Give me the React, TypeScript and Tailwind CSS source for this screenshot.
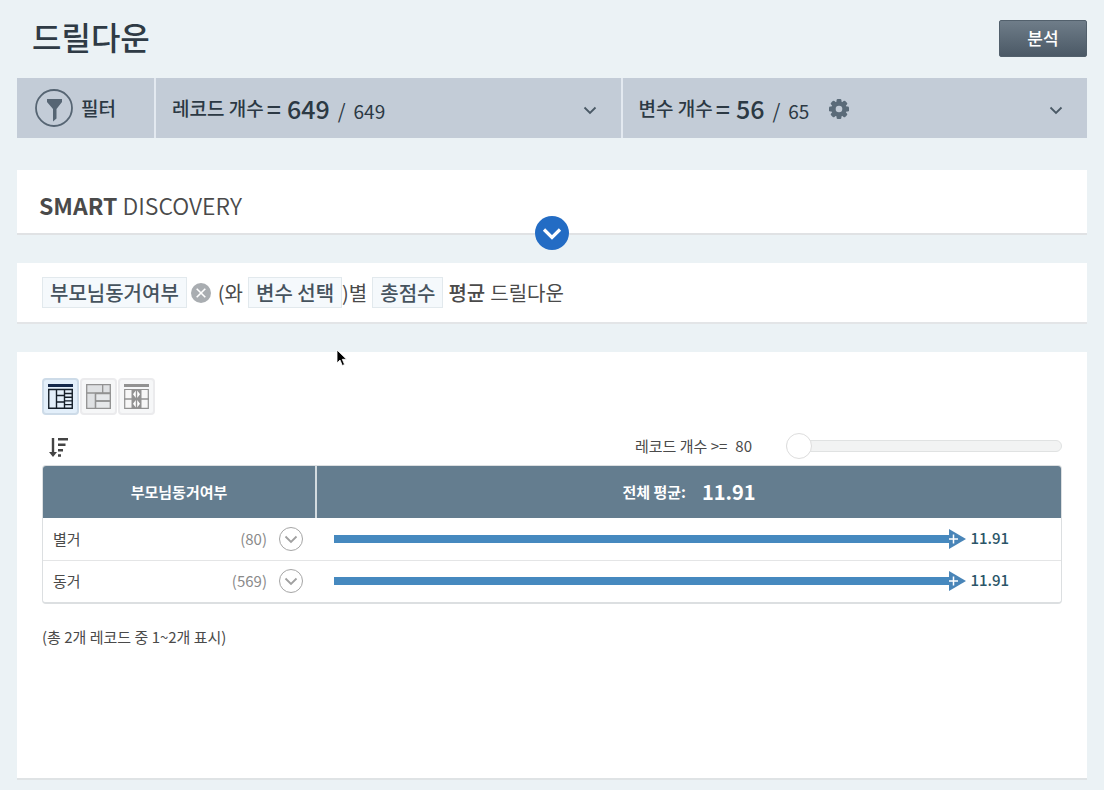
import { useState } from "react";

interface RowData {
  name: string;
  count: number;
  value: number;
  ratio: number;
}

const rows: RowData[] = [
  { name: "별거", count: 80, value: 11.91, ratio: 87 },
  { name: "동거", count: 569, value: 11.91, ratio: 87 },
];

const Chevron = ({ className }: { className: string }) => (
  <svg viewBox="0 0 14 14" className={className} fill="none" stroke="currentColor" strokeWidth="1.800">
    <path d="M1.500 4.500 7 10 12.500 4.500" />
  </svg>
);

const FilterIcon = () => (
  <svg viewBox="0 0 38 38" className="h-[38px] w-[38px] text-[#566573]">
    <circle cx="19" cy="19" r="18" fill="none" stroke="currentColor" strokeWidth="1.8" />
    <path d="M12 10h15v3l-5.500 7v9.500L18 32.500V20L12 13z" fill="currentColor" />
  </svg>
);

const GearIcon = () => (
  <svg viewBox="0 0 20 20" className="h-5 w-5 text-[#5b6b79]" fill="currentColor">
    {[0, 45, 90, 135].map((deg) => (
      <rect key={deg} x="7.600" y="0" width="4.800" height="20" rx="1.200" transform={`rotate(${deg} 10 10)`} />
    ))}
    <circle cx="10" cy="10" r="7.800" />
    <circle cx="10" cy="10" r="3.300" fill="#c3ccd7" />
  </svg>
);

const TableIcon = () => (
  <svg viewBox="0 0 25 25" className="h-[25px] w-[25px]" fill="none" stroke="#141e28">
    <path d="M0 1.500h25" stroke="#14284a" strokeWidth="3" />
    <path d="M.75 5v19.250h23.500V5M0 5.500h25M8.500 5v19M16.500 5v19M8.500 11.500h8M8.500 18h8" strokeWidth="1.400" />
    <path d="M16.500 9.500h8M16.500 13.200h8M16.500 16.900h8M16.500 20.600h8" strokeWidth="1.400" />
  </svg>
);

const TreemapIcon = () => (
  <svg viewBox="0 0 25 25" className="h-[25px] w-[25px]" stroke="#929292" strokeWidth="1.300">
    <path d="M.7.700h23.600v23.600H.700z" fill="#dfe1e3" />
    <path d="M9.500 17h14.800v7.300H9.500zM9.500 9.500h14.800V17H9.500z" fill="#e6e8ea" />
    <path d="M.700 9h23.600M16.700.700V9M9.500 9v15.300M9.500 17h14.800" fill="none" />
  </svg>
);

const DistributionIcon = () => (
  <svg viewBox="0 0 25 25" className="h-[25px] w-[25px]" stroke="#929292">
    <path d="M0 1.500h25" strokeWidth="3" />
    <path d="M.700 5.500h23.600v18.800H.700z" fill="#f7f7f7" strokeWidth="1.200" />
    <path d="M8 5.500h9v18.800H8z" fill="#929292" />
    <path d="M0 15h25" strokeWidth="1.500" />
    <path d="M11.800 6.500v7.500L9 10.250zM13.200 6.500v7.500L16 10.250zM11.800 16v7.500L9 19.750zM13.200 16v7.500L16 19.750z" fill="#fff" stroke="none" />
  </svg>
);

const SortIcon = () => (
  <svg viewBox="0 0 19 20" className="h-5 w-[19px]" fill="#444">
    <path d="M2.800 1h2.400v14H8l-4 5-4-5h2.800zM9 1h10v2.500H9zM9 6.500h7.500V9H9zM9 12h5v2.500H9zM9 17.200h3v2.500H9z" />
  </svg>
);

const views = [
  { label: "테이블", icon: <TableIcon /> },
  { label: "트리맵", icon: <TreemapIcon /> },
  { label: "분포", icon: <DistributionIcon /> },
];

const CountPanel = ({ label, current, total, settings = false }: { label: string; current: number; total: number; settings?: boolean }) => (
  <div className="flex flex-1 items-center border-l-2 border-[#e3e9f0] pr-6 pl-4">
    <div className="flex items-center pt-px">
      <span className="text-[19px] font-medium">{label}</span>
      <div className="ml-[3px] flex items-baseline">
        <span className="text-[25px] font-medium">=</span>
        <span className="ml-[6px] text-[25px] font-medium">{current}</span>
        <span className="ml-2 text-[20px]">/</span>
        <span className="ml-2 text-[19px]">{total}</span>
      </div>
    </div>
    {settings && (
      <button aria-label="변수 설정" className="ml-5 pt-[2px]">
        <GearIcon />
      </button>
    )}
    <button aria-label={`${label} 펼치기`} className="mt-1 ml-auto">
      <Chevron className="h-[14px] w-[14px] text-[#4a5966]" />
    </button>
  </div>
);

const Chip = ({ children }: { children: string }) => (
  <button className="h-[31px] border border-[#e2e9ed] bg-[#f5f9fc] px-[7px] leading-[29px] font-medium text-[#46535e]">{children}</button>
);

const App = () => {
  const [view, setView] = useState(0);
  const [min, setMin] = useState(80);

  return (
    <div className="relative min-h-screen bg-[#ebf2f5] px-[17px] pb-3 font-['Noto_Sans_CJK_KR',sans-serif] text-[#4a4a4a]">
      <header className="flex h-[78px] items-center justify-between pb-[2px] pl-[15px]">
        <h1 className="pb-1 text-[32px] font-medium text-[#2f3b45]">드릴다운</h1>
        <button className="h-[37px] w-[88px] rounded-xs border border-[#52606c] bg-linear-to-b from-[#6f7d89] to-[#4b5966] text-[17px] font-medium text-white">
          분석
        </button>
      </header>

      <div className="flex h-[60px] bg-[#c3ccd7] text-[#2c3944]">
        <div className="flex w-[137px] items-center gap-2 pl-[18px]">
          <FilterIcon />
          <span className="text-[19px] font-medium">필터</span>
        </div>
        <CountPanel label="레코드 개수" current={649} total={649} />
        <CountPanel label="변수 개수" current={56} total={65} settings />
      </div>

      <section className="relative mt-8 h-[65px] border-b-2 border-[#e0e2e4] bg-white px-[22px] pt-[15px]">
        <h2 className="text-[23px] leading-10 font-[350]">
          <b className="font-bold">SMART</b> DISCOVERY
        </h2>
        <button aria-label="펼치기" className="absolute -bottom-[17px] left-1/2 flex h-[34px] w-[34px] -translate-x-1/2 items-center justify-center rounded-full bg-[#236cc4] text-white">
          <svg viewBox="0 0 20 20" className="h-5 w-5" fill="none" stroke="currentColor" strokeWidth="3.200">
            <path d="M2 6.500 10 14.500 18 6.500" />
          </svg>
        </button>
      </section>

      <section className="mt-7 flex h-[61px] items-center border-b-2 border-[#e3e5e7] bg-white px-[25px] text-[20px]">
        <Chip>부모님동거여부</Chip>
        <button aria-label="삭제" className="mr-[7px] ml-1">
          <svg viewBox="0 0 20 20" className="h-5 w-5">
            <circle cx="10" cy="10" r="10" fill="#a9adb1" />
            <path d="M5.700 5.700l8.600 8.600M14.300 5.700l-8.600 8.600" stroke="#fff" strokeWidth="1.600" />
          </svg>
        </button>
        <span>(와</span>
        <span className="ml-[5px]">
          <Chip>변수 선택</Chip>
        </span>
        <span className="mr-[5px]">)별</span>
        <Chip>총점수</Chip>
        <b className="ml-[5px] font-medium">평균</b>
        <span className="ml-[5px]">드릴다운</span>
      </section>

      <section className="mt-7 min-h-[428px] border-b-2 border-[#dfe3e5] bg-white px-[25px] pt-[26px] text-[15px]">
        <div className="flex gap-px">
          {views.map((item, i) => (
            <button
              key={item.label}
              aria-label={item.label}
              onClick={() => setView(i)}
              className={`flex h-[37px] w-[37px] items-center justify-center rounded-sm border-2 ${view === i ? "border-[#cddbe8] bg-[#e3effa]" : "border-[#ebebed] bg-[#f6f7f8]"}`}
            >
              {item.icon}
            </button>
          ))}
        </div>

        <div className="mt-[18px] flex h-[26px] items-center justify-between pl-[7px]">
          <button aria-label="정렬" className="pt-[2px]">
            <SortIcon />
          </button>
          <div className="flex items-center">
            <label htmlFor="min-count">레코드 개수 &gt;=</label>
            <span className="ml-2">{min}</span>
            <input
              id="min-count"
              type="range"
              min={80}
              max={569}
              value={min}
              onChange={(e) => setMin(Number(e.target.value))}
              className="ml-[34px] h-[26px] w-[276px] appearance-none bg-transparent [&::-webkit-slider-runnable-track]:h-3 [&::-webkit-slider-runnable-track]:rounded-md [&::-webkit-slider-runnable-track]:border [&::-webkit-slider-runnable-track]:border-[#e0e2e2] [&::-webkit-slider-runnable-track]:bg-[#f2f3f3] [&::-webkit-slider-thumb]:-mt-2 [&::-webkit-slider-thumb]:-ml-px [&::-webkit-slider-thumb]:h-[26px] [&::-webkit-slider-thumb]:w-[26px] [&::-webkit-slider-thumb]:appearance-none [&::-webkit-slider-thumb]:rounded-full [&::-webkit-slider-thumb]:border [&::-webkit-slider-thumb]:border-[#dddddd] [&::-webkit-slider-thumb]:bg-white"
            />
          </div>
        </div>

        <div className="mt-[6px] overflow-hidden rounded-sm border border-b-2 border-[#dcdfe1]">
          <table className="w-full table-fixed">
            <thead>
              <tr className="h-[52px] bg-[#647d8f] text-white">
                <th className="w-[273px] border-r-2 border-[#d3dbe0]">부모님동거여부</th>
                <th>
                  <div className="flex items-center justify-center">
                    전체 평균:<span className="ml-4 text-[20px]">11.91</span>
                  </div>
                </th>
              </tr>
            </thead>
            <tbody>
              {rows.map((row) => (
                <tr key={row.name} className="h-[42px] border-b border-[#e4e5e6] last:border-0">
                  <td className="pr-[13px] pl-[10px]">
                    <div className="flex items-center">
                      <span>{row.name}</span>
                      <span className="ml-auto text-[#8a8a8a]">({row.count})</span>
                      <button aria-label={`${row.name} 펼치기`} className="ml-3 flex h-6 w-6 items-center justify-center rounded-full border border-[#a5a5a5] text-[#a0a0a0]">
                        <Chevron className="h-[14px] w-[14px]" />
                      </button>
                    </div>
                  </td>
                  <td className="pl-[18px]">
                    <div className="flex items-center">
                      <div className="flex items-center" style={{ width: `${row.ratio}%` }}>
                        <div className="h-2 flex-1 bg-[#4689bf]" />
                        <svg viewBox="0 0 17 20" className="h-5 w-[17px]">
                          <path d="M0 0 17 10 0 20z" fill="#4985b8" />
                          <path d="M0 10h9M4.500 5.500v9" stroke="#fff" strokeWidth="1.500" />
                        </svg>
                      </div>
                      <span className="ml-1 pb-[2px] font-medium text-[#2a5568]">{row.value}</span>
                    </div>
                  </td>
                </tr>
              ))}
            </tbody>
          </table>
        </div>

        <p className="mt-[22px]">(총 2개 레코드 중 1~2개 표시)</p>
      </section>

      <svg viewBox="0 0 12 18" className="pointer-events-none absolute top-[349px] left-[336px] h-[18px] w-3">
        <path d="M1 1v13l3-3 2.300 5.500 2.200-1L6.300 10.300H10.500z" fill="#000" stroke="#fff" strokeWidth=".8" />
      </svg>
    </div>
  );
};

export default App;
